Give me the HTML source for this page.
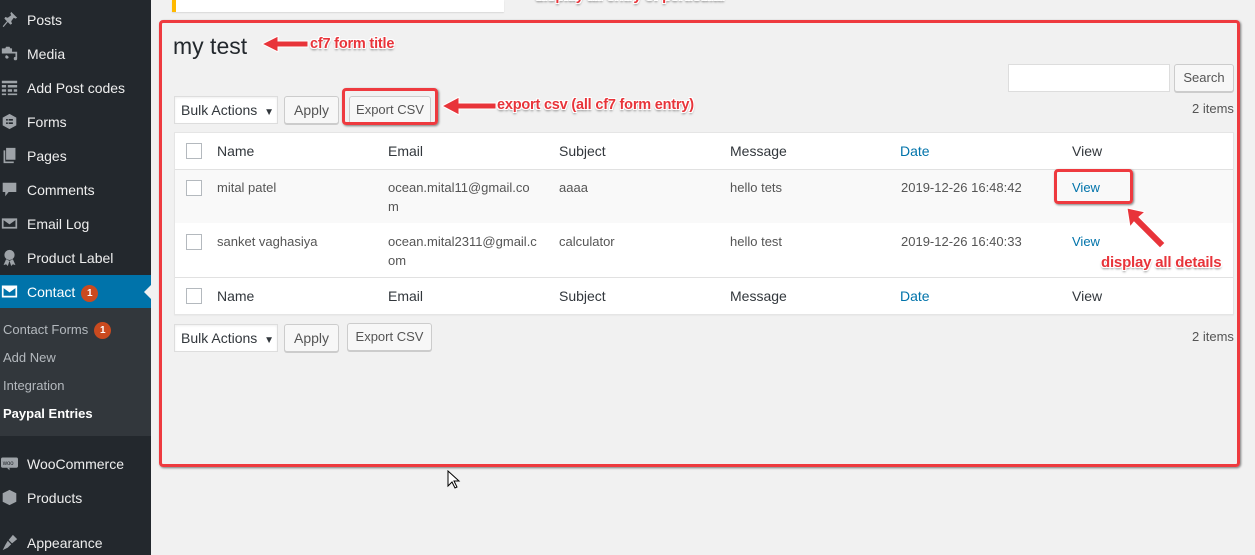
<!DOCTYPE html>
<html><head><meta charset="utf-8"><style>
*{box-sizing:border-box;margin:0;padding:0}
body{width:1255px;height:555px;overflow:hidden;background:#f1f1f1;font-family:"Liberation Sans",sans-serif;position:relative;color:#23282d}
.a{position:absolute}
#sb{left:0;top:0;width:151px;height:555px;background:#23282d}
.mi{position:absolute;left:27px;font-size:14px;color:#eee;white-space:nowrap}
.ic{position:absolute;left:1px;width:17px;height:17px;fill:#9ea3a8}
.sub{position:absolute;left:3px;font-size:13px;color:#b4b9be;white-space:nowrap}
.badge{display:inline-block;width:17px;height:17px;border-radius:50%;background:#ca4a1f;color:#fff;font-size:10px;font-weight:bold;text-align:center;line-height:17px;vertical-align:1px;margin-left:6px}
.btn{position:absolute;height:28px;border:1px solid #ccc;background:#f7f7f7;border-radius:3px;font-size:13px;color:#555;text-align:center;line-height:26px;box-shadow:0 1px 0 #ccc}
.sel{position:absolute;height:28px;border:1px solid #ddd;background:#fff;font-size:14px;color:#32373c;line-height:26px;padding-left:6px;box-shadow:inset 0 1px 2px rgba(0,0,0,.07)}
.cb{position:absolute;left:12px;width:16px;height:16px;border:1px solid #b4b9be;background:#fff}
.t{position:absolute;font-size:13px;color:#555;line-height:19px}
.h{position:absolute;font-size:14px;color:#32373c}
.lk{color:#0073aa}
.ann{position:absolute;font-weight:bold;font-size:14.5px;color:#e8343a;white-space:nowrap;text-shadow:-1px -1px 0 #fff,1px -1px 0 #fff,-1px 1px 0 #fff,1px 1px 0 #fff,0 2px 2px rgba(0,0,0,.5);letter-spacing:-0.2px}
.rb{position:absolute;border:3px solid #ee3a3f;border-radius:4px;box-shadow:1px 1px 2px rgba(0,0,0,.5)}
</style></head><body>
<div id="sb" class="a">
 <svg class="ic" style="top:11px" viewBox="0 0 20 20"><path d="M12 1l7 7-2 1-2-1-3 4 1 3-2 1-3-3-5 6-1-1 5-6-3-3 1-2 3 1 4-3-1-2z"/></svg>
 <div class="mi" style="top:12px">Posts</div>
 <svg class="ic" style="top:45px" viewBox="0 0 20 20"><path d="M1 4h4l1-2h4l1 2h2v6H1z M13 8h6v8a2 2 0 1 1-2-2V10h-4z M9 14a2 2 0 1 1-2-2z"/></svg>
 <div class="mi" style="top:46px">Media</div>
 <svg class="ic" style="top:79px" viewBox="0 0 20 20"><path d="M1 2h18v3H1zM1 7h5v3H1zM8 7h11v3H8zM1 12h5v3H1zM8 12h5v3H8zM15 12h4v3h-4zM1 17h5v2H1zM8 17h11v2H8z"/></svg>
 <div class="mi" style="top:80px">Add Post codes</div>
 <svg class="ic" style="top:113px" viewBox="0 0 20 20"><path d="M10 1l8 4.5v9L10 19l-8-4.5v-9z" /><path d="M6 7h2v2H6zM9 7h5v2H9zM6 11h2v2H6zM9 11h5v2H9z" fill="#23282d"/></svg>
 <div class="mi" style="top:114px">Forms</div>
 <svg class="ic" style="top:147px" viewBox="0 0 20 20"><path d="M6 1h11v14H6zM3 4h2v13h10v2H3z"/></svg>
 <div class="mi" style="top:148px">Pages</div>
 <svg class="ic" style="top:181px" viewBox="0 0 20 20"><path d="M2 2h16v11H9l-4 5v-5H2z"/></svg>
 <div class="mi" style="top:182px">Comments</div>
 <svg class="ic" style="top:215px" viewBox="0 0 20 20"><path d="M1 4h18v12H1z M3 6v8h14V6l-7 5z" fill-rule="evenodd"/></svg>
 <div class="mi" style="top:216px">Email Log</div>
 <svg class="ic" style="top:249px" viewBox="0 0 20 20"><circle cx="10" cy="7" r="6"/><path d="M6 12l-3 7 3-1 2 2 2-6zM14 12l3 7-3-1-2 2-2-6z"/></svg>
 <div class="mi" style="top:250px">Product Label</div>
 <div class="a" style="left:0;top:275px;width:151px;height:33px;background:#0073aa"></div>
 <svg class="ic" style="top:283px;fill:#fff" viewBox="0 0 20 20"><path d="M1 3h18v14H1z M3 6v9h14V6l-7 5z" fill-rule="evenodd"/></svg>
 <div class="mi" style="top:284px;color:#fff">Contact<span class="badge">1</span></div>
 <div class="a" style="left:144px;top:284px;width:0;height:0;border-top:8px solid transparent;border-bottom:8px solid transparent;border-right:8px solid #f1f1f1"></div>
 <div class="a" style="left:0;top:308px;width:151px;height:128px;background:#32373c"></div>
 <div class="sub" style="top:322px">Contact Forms<span class="badge">1</span></div>
 <div class="sub" style="top:350px">Add New</div>
 <div class="sub" style="top:378px">Integration</div>
 <div class="sub" style="top:406px;color:#fff;font-weight:bold">Paypal Entries</div>
 <svg class="ic" style="top:455px" viewBox="0 0 20 20"><rect x="0" y="3" width="20" height="12" rx="2"/><path d="M7 15l3 3v-3z"/><text x="2" y="12" font-size="7" fill="#23282d" font-family="Liberation Sans">woo</text></svg>
 <div class="mi" style="top:456px">WooCommerce</div>
 <svg class="ic" style="top:489px" viewBox="0 0 20 20"><path d="M10 1l8 4v10l-8 4-8-4V5z"/></svg>
 <div class="mi" style="top:490px">Products</div>
 <svg class="ic" style="top:534px" viewBox="0 0 20 20"><path d="M14 1l5 5-6 5-4-4zM8 8l4 4-4 4-6 3 3-6z"/></svg>
 <div class="mi" style="top:535px">Appearance</div>
</div>

<div class="a" style="left:172px;top:0;width:332px;height:12px;background:#fff;border-left:4px solid #ffb900;box-shadow:0 1px 1px rgba(0,0,0,.1)"></div>
<div class="ann" style="left:535px;top:-12px">display all entry of perticular</div>

<div class="rb" style="left:159px;top:20px;width:1081px;height:447px"></div>

<div class="a" style="left:173px;top:33px;font-size:23px;color:#23282d">my test</div>
<svg class="a" style="left:260px;top:34px" width="50" height="20"><path d="M2 10L18 2v5h30v6H18v5z" fill="#e8343a" stroke="#fff" stroke-width="1"/></svg>
<div class="ann" style="left:310px;top:36px">cf7 form title</div>

<div class="a" style="left:1008px;top:64px;width:162px;height:28px;background:#fff;border:1px solid #ddd"></div>
<div class="btn" style="left:1174px;top:64px;width:60px">Search</div>
<div class="a" style="left:1192px;top:101px;font-size:13px;color:#555">2 items</div>

<div class="sel" style="left:174px;top:96px;width:104px">Bulk Actions <span style="font-size:10px;margin-left:3px">▼</span></div>
<div class="btn" style="left:284px;top:96px;width:55px;font-size:14px">Apply</div>
<div class="btn" style="left:349px;top:96px;width:82px">Export CSV</div>
<div class="rb" style="left:342px;top:88px;width:96px;height:37px"></div>
<svg class="a" style="left:440px;top:95px" width="58" height="22"><path d="M2 11L19 2v6h37v6H19v6z" fill="#e8343a" stroke="#fff" stroke-width="1"/></svg>
<div class="ann" style="left:497px;top:97px">export csv (all cf7 form entry)</div>

<div class="a" style="left:174px;top:132px;width:1060px;height:183px;background:#fff;border:1px solid #e5e5e5;box-shadow:0 1px 1px rgba(0,0,0,.04)"></div>
<div class="a" style="left:175px;top:169px;width:1058px;height:54px;background:#f9f9f9;border-top:1px solid #e1e1e1"></div>
<div class="a" style="left:175px;top:277px;width:1058px;height:1px;background:#e1e1e1"></div>

<div class="cb" style="left:186px;top:143px"></div>
<div class="h" style="left:217px;top:143px">Name</div><div class="h" style="left:388px;top:143px">Email</div><div class="h" style="left:559px;top:143px">Subject</div><div class="h" style="left:730px;top:143px">Message</div><div class="h lk" style="left:900px;top:143px">Date</div><div class="h" style="left:1072px;top:143px">View</div>

<div class="cb" style="left:186px;top:180px"></div>
<div class="t" style="left:217px;top:178px">mital patel</div><div class="t" style="left:388px;top:178px;width:160px">ocean.mital11@gmail.co<br>m</div><div class="t" style="left:559px;top:178px">aaaa</div><div class="t" style="left:730px;top:178px">hello tets</div><div class="t" style="left:901px;top:178px">2019-12-26 16:48:42</div><div class="t lk" style="left:1072px;top:178px">View</div>
<div class="rb" style="left:1054px;top:169px;width:79px;height:35px"></div>

<div class="cb" style="left:186px;top:234px"></div>
<div class="t" style="left:217px;top:232px">sanket vaghasiya</div><div class="t" style="left:388px;top:232px;width:165px">ocean.mital2311@gmail.c<br>om</div><div class="t" style="left:559px;top:232px">calculator</div><div class="t" style="left:730px;top:232px">hello test</div><div class="t" style="left:901px;top:232px">2019-12-26 16:40:33</div><div class="t lk" style="left:1072px;top:232px">View</div>
<svg class="a" style="left:1124px;top:205px" width="44" height="44"><path d="M3 3L21 7 15 12 41 38 36 43 10 17 6 22z" fill="#e8343a" stroke="#fff" stroke-width="1"/></svg>
<div class="ann" style="left:1101px;top:254px;font-size:15px">display all details</div>

<div class="cb" style="left:186px;top:288px"></div>
<div class="h" style="left:217px;top:288px">Name</div><div class="h" style="left:388px;top:288px">Email</div><div class="h" style="left:559px;top:288px">Subject</div><div class="h" style="left:730px;top:288px">Message</div><div class="h lk" style="left:900px;top:288px">Date</div><div class="h" style="left:1072px;top:288px">View</div>

<div class="sel" style="left:174px;top:324px;width:104px">Bulk Actions <span style="font-size:10px;margin-left:3px">▼</span></div>
<div class="btn" style="left:284px;top:324px;width:55px;font-size:14px">Apply</div>
<div class="btn" style="left:347px;top:323px;width:85px">Export CSV</div>
<div class="a" style="left:1192px;top:329px;font-size:13px;color:#555">2 items</div>

<svg class="a" style="left:447px;top:470px" width="14" height="20"><path d="M1 1v15l4-4 3 6 2-1-3-6h5z" fill="#fff" stroke="#000" stroke-width="1"/></svg>
</body></html>
